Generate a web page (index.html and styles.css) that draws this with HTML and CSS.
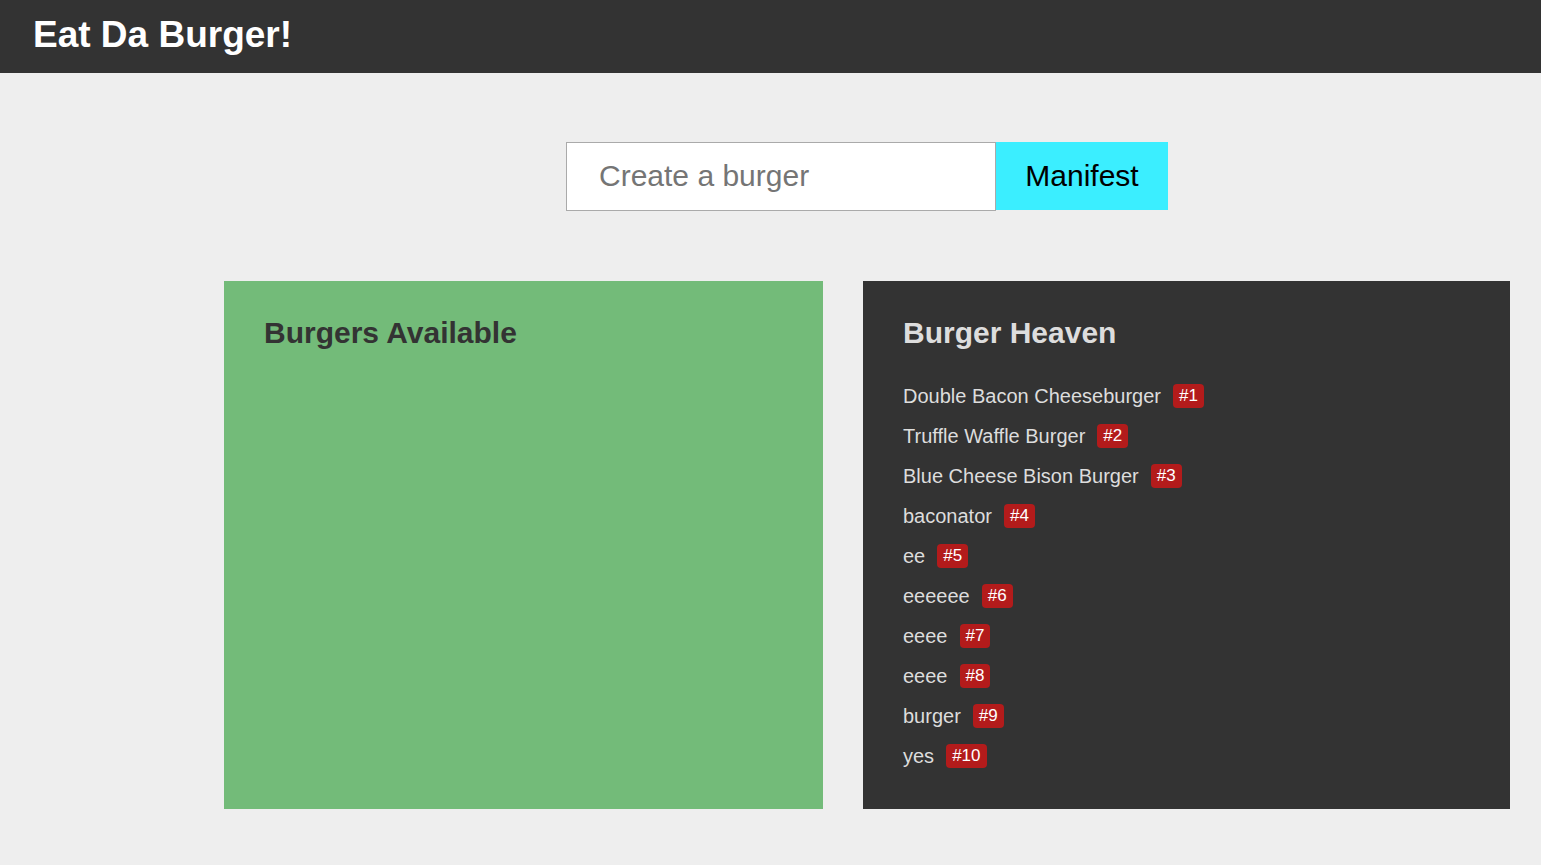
FILE: index.html
```html
<!DOCTYPE html>
<html>
<head>
<meta charset="utf-8">
<title>Eat Da Burger!</title>
<link rel="stylesheet" href="styles.css">
</head>
<body>
<header class="topbar">
  <h1 class="brand">Eat Da Burger!</h1>
</header>
<main class="main">
  <form class="create-form">
    <input class="create-input" type="text" placeholder="Create a burger">
    <button class="create-btn" type="button">Manifest</button>
  </form>
  <section class="panels">
    <div class="panel panel-available">
      <h2 class="panel-title">Burgers Available</h2>
    </div>
    <div class="panel panel-heaven">
      <h2 class="panel-title">Burger Heaven</h2>
      <ul class="burger-list">
        <li class="burger-item">Double Bacon Cheeseburger <span class="badge">#1</span></li>
        <li class="burger-item">Truffle Waffle Burger <span class="badge">#2</span></li>
        <li class="burger-item">Blue Cheese Bison Burger <span class="badge">#3</span></li>
        <li class="burger-item">baconator <span class="badge">#4</span></li>
        <li class="burger-item">ee <span class="badge">#5</span></li>
        <li class="burger-item">eeeeee <span class="badge">#6</span></li>
        <li class="burger-item">eeee <span class="badge">#7</span></li>
        <li class="burger-item">eeee <span class="badge">#8</span></li>
        <li class="burger-item">burger <span class="badge">#9</span></li>
        <li class="burger-item">yes <span class="badge">#10</span></li>
      </ul>
    </div>
  </section>
</main>
</body>
</html>
```
FILE: styles.css
```css
* { box-sizing: border-box; }
html, body {
  margin: 0;
  padding: 0;
  background: #eeeeee;
  font-family: "Liberation Sans", Arial, sans-serif;
}
.topbar {
  background: #333333;
  height: 73px;
  padding: 0 33px 3px 33px;
  display: flex;
  align-items: center;
}
.brand {
  margin: 0;
  color: #ffffff;
  font-size: 37px;
  font-weight: bold;
}
.main {
  padding-top: 69px;
}
.create-form {
  display: flex;
  margin: 0 0 0 566px;
  height: 69px;
}
.create-input {
  width: 430px;
  height: 69px;
  border: 1px solid #aaaaaa;
  background: #ffffff;
  padding: 0 0 2px 32px;
  font-family: "Liberation Sans", Arial, sans-serif;
  font-size: 30px;
  color: #333;
  outline: none;
}
.create-input::placeholder { color: #757575; }
.create-btn {
  width: 172px;
  height: 68px;
  border: none;
  background: #3beeff;
  font-family: "Liberation Sans", Arial, sans-serif;
  font-size: 30px;
  color: #000;
  padding: 0;
}
.panels {
  display: flex;
  gap: 40px;
  margin: 70px 0 0 224px;
}
.panel {
  height: 528px;
  padding: 35px 40px 0 40px;
}
.panel-available {
  width: 599px;
  background: #73bb79;
  color: #333333;
}
.panel-heaven {
  width: 647px;
  background: #333333;
  color: #dddddd;
}
.panel-title {
  margin: 0 0 26px 0;
  font-size: 30px;
  font-weight: bold;
}
.burger-list {
  list-style: none;
  margin: 0;
  padding: 0;
}
.burger-item {
  height: 40px;
  display: flex;
  align-items: center;
  font-size: 20px;
  color: #dddddd;
}
.badge {
  margin-left: 12px;
  background: #b31b1b;
  color: #ffffff;
  font-size: 17px;
  line-height: 24px;
  padding: 0 6px;
  border-radius: 4px;
}
```
